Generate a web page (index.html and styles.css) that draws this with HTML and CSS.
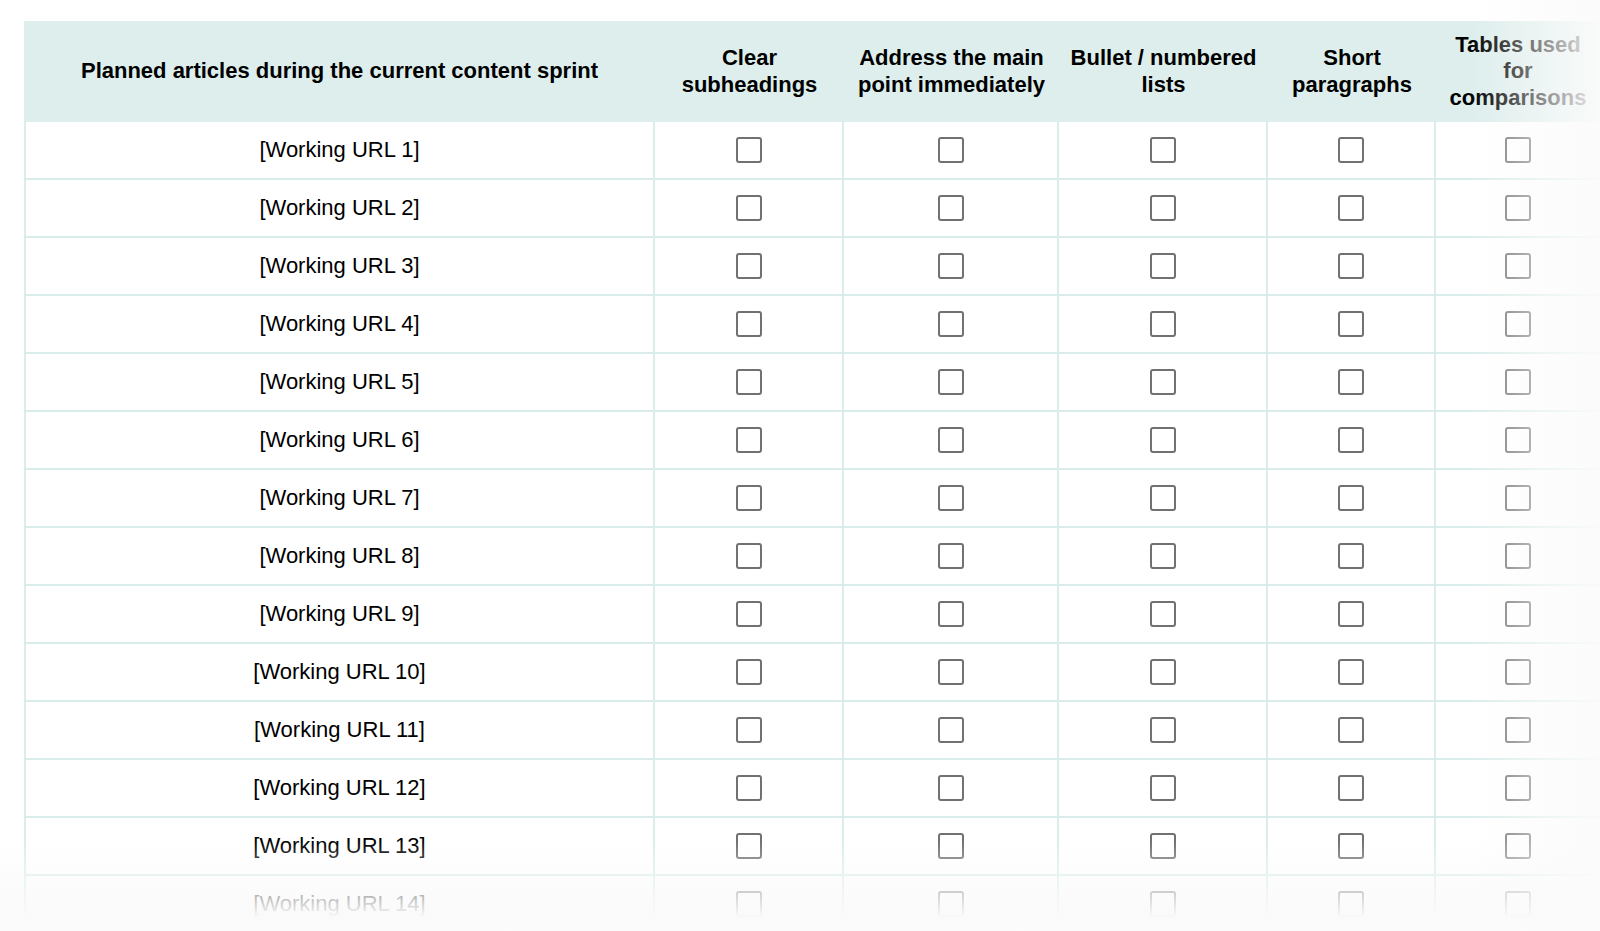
FILE: index.html
```html
<!DOCTYPE html>
<html lang="en">
<head>
<meta charset="utf-8">
<title>Content sprint checklist</title>
<link rel="stylesheet" href="styles.css">
</head>
<body>
<div class="page">
  <table class="grid">
    <colgroup>
      <col class="c1"><col class="c2"><col class="c3"><col class="c4"><col class="c5"><col class="c6">
    </colgroup>
    <thead>
      <tr>
        <th>Planned articles during the current content sprint</th>
        <th>Clear<br>subheadings</th>
        <th>Address the main<br>point immediately</th>
        <th>Bullet / numbered<br>lists</th>
        <th>Short<br>paragraphs</th>
        <th>Tables used<br>for<br>comparisons</th>
      </tr>
    </thead>
    <tbody>
      <tr><td>[Working URL 1]</td><td><span class="box"></span></td><td><span class="box"></span></td><td><span class="box"></span></td><td><span class="box"></span></td><td><span class="box"></span></td></tr>
      <tr><td>[Working URL 2]</td><td><span class="box"></span></td><td><span class="box"></span></td><td><span class="box"></span></td><td><span class="box"></span></td><td><span class="box"></span></td></tr>
      <tr><td>[Working URL 3]</td><td><span class="box"></span></td><td><span class="box"></span></td><td><span class="box"></span></td><td><span class="box"></span></td><td><span class="box"></span></td></tr>
      <tr><td>[Working URL 4]</td><td><span class="box"></span></td><td><span class="box"></span></td><td><span class="box"></span></td><td><span class="box"></span></td><td><span class="box"></span></td></tr>
      <tr><td>[Working URL 5]</td><td><span class="box"></span></td><td><span class="box"></span></td><td><span class="box"></span></td><td><span class="box"></span></td><td><span class="box"></span></td></tr>
      <tr><td>[Working URL 6]</td><td><span class="box"></span></td><td><span class="box"></span></td><td><span class="box"></span></td><td><span class="box"></span></td><td><span class="box"></span></td></tr>
      <tr><td>[Working URL 7]</td><td><span class="box"></span></td><td><span class="box"></span></td><td><span class="box"></span></td><td><span class="box"></span></td><td><span class="box"></span></td></tr>
      <tr><td>[Working URL 8]</td><td><span class="box"></span></td><td><span class="box"></span></td><td><span class="box"></span></td><td><span class="box"></span></td><td><span class="box"></span></td></tr>
      <tr><td>[Working URL 9]</td><td><span class="box"></span></td><td><span class="box"></span></td><td><span class="box"></span></td><td><span class="box"></span></td><td><span class="box"></span></td></tr>
      <tr><td>[Working URL 10]</td><td><span class="box"></span></td><td><span class="box"></span></td><td><span class="box"></span></td><td><span class="box"></span></td><td><span class="box"></span></td></tr>
      <tr><td>[Working URL 11]</td><td><span class="box"></span></td><td><span class="box"></span></td><td><span class="box"></span></td><td><span class="box"></span></td><td><span class="box"></span></td></tr>
      <tr><td>[Working URL 12]</td><td><span class="box"></span></td><td><span class="box"></span></td><td><span class="box"></span></td><td><span class="box"></span></td><td><span class="box"></span></td></tr>
      <tr><td>[Working URL 13]</td><td><span class="box"></span></td><td><span class="box"></span></td><td><span class="box"></span></td><td><span class="box"></span></td><td><span class="box"></span></td></tr>
      <tr><td>[Working URL 14]</td><td><span class="box"></span></td><td><span class="box"></span></td><td><span class="box"></span></td><td><span class="box"></span></td><td><span class="box"></span></td></tr>
    </tbody>
  </table>
  <div class="fade-right"></div>
  <div class="fade-bottom"></div>
</div>
</body>
</html>
```

FILE: styles.css
```css
html, body {
  margin: 0;
  padding: 0;
  width: 1600px;
  height: 931px;
  overflow: hidden;
  background: #ffffff;
}

.page {
  position: relative;
  width: 1600px;
  height: 931px;
  padding-top: 21px;
  padding-left: 24px;
  box-sizing: border-box;
  overflow: hidden;
  font-family: "Liberation Sans", Arial, sans-serif;
  color: #000;
}

.grid {
  table-layout: fixed;
  border-collapse: separate;
  border-spacing: 0;
  width: 1576px;
}

.c1 { width: 631px; }
.c2 { width: 189px; }
.c3 { width: 215px; }
.c4 { width: 209px; }
.c5 { width: 168px; }
.c6 { width: 164px; }

.grid th {
  background: #ddeeec;
  height: 101px;
  padding: 0 4px;
  box-sizing: border-box;
  font-size: 22px;
  line-height: 26.5px;
  font-weight: bold;
  text-align: center;
  vertical-align: middle;
  white-space: nowrap;
}

.grid td {
  height: 58px;
  box-sizing: border-box;
  padding: 0;
  border-right: 2px solid #d9eeeb;
  border-bottom: 2px solid #d9eeeb;
  font-size: 22px;
  text-align: center;
  vertical-align: middle;
  white-space: nowrap;
}

.grid td:first-child {
  border-left: 2px solid #d9eeeb;
}

.grid td:last-child {
  border-right: none;
}

.box {
  display: inline-block;
  width: 26px;
  height: 26px;
  box-sizing: border-box;
  border: 2.5px solid #717171;
  border-radius: 3px;
  vertical-align: middle;
  margin-top: -2px;
}

.fade-right {
  position: absolute;
  top: 0;
  right: 0;
  width: 130px;
  height: 100%;
  background: linear-gradient(to right,
    rgba(251, 251, 251, 0) 0%,
    rgba(251, 251, 251, 0.45) 45%,
    rgba(251, 251, 251, 0.96) 100%);
  pointer-events: none;
}

.fade-bottom {
  position: absolute;
  left: 0;
  bottom: 0;
  width: 100%;
  height: 90px;
  background: linear-gradient(to bottom,
    rgba(250, 250, 250, 0) 0%,
    rgba(250, 250, 250, 0.5) 40%,
    rgba(250, 250, 250, 1) 85%,
    rgba(252, 252, 252, 1) 100%);
  pointer-events: none;
}
```
